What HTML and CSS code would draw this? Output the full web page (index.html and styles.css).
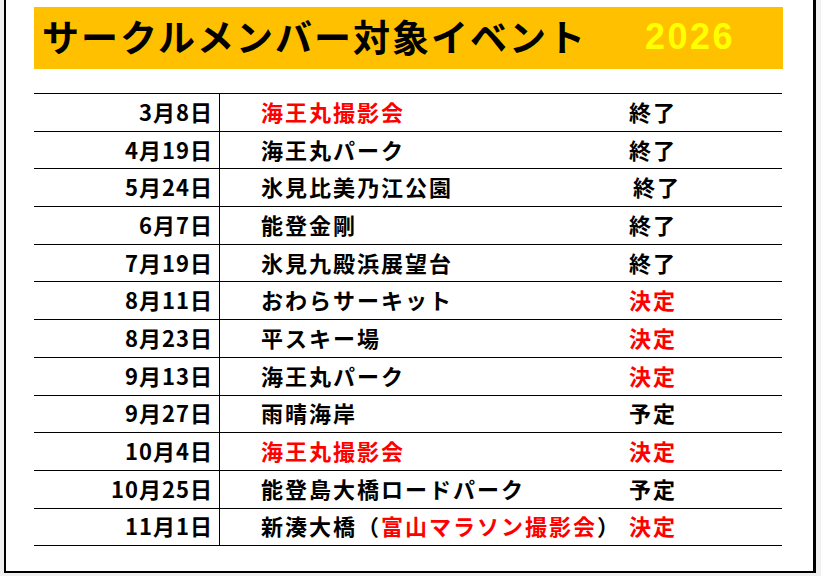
FILE: index.html
```html
<!DOCTYPE html>
<html lang="ja">
<head>
<meta charset="utf-8">
<title>サークルメンバー対象イベント 2026</title>
<link rel="stylesheet" href="styles.css">
</head>
<body>
<div class="frame">
  <div class="banner">
    <span class="title">サークルメンバー対象イベント</span>
    <span class="year">2026</span>
  </div>
  <div class="table">
    <div class="row"><div class="date">3月8日</div><div class="event red">海王丸撮影会</div><div class="status">終了</div></div>
    <div class="row"><div class="date">4月19日</div><div class="event">海王丸パーク</div><div class="status">終了</div></div>
    <div class="row"><div class="date">5月24日</div><div class="event">氷見比美乃江公園</div><div class="status shift">終了</div></div>
    <div class="row"><div class="date">6月7日</div><div class="event">能登金剛</div><div class="status">終了</div></div>
    <div class="row"><div class="date">7月19日</div><div class="event">氷見九殿浜展望台</div><div class="status">終了</div></div>
    <div class="row"><div class="date">8月11日</div><div class="event">おわらサーキット</div><div class="status red">決定</div></div>
    <div class="row"><div class="date">8月23日</div><div class="event">平スキー場</div><div class="status red">決定</div></div>
    <div class="row"><div class="date">9月13日</div><div class="event">海王丸パーク</div><div class="status red">決定</div></div>
    <div class="row"><div class="date">9月27日</div><div class="event">雨晴海岸</div><div class="status">予定</div></div>
    <div class="row"><div class="date">10月4日</div><div class="event red">海王丸撮影会</div><div class="status red">決定</div></div>
    <div class="row"><div class="date">10月25日</div><div class="event">能登島大橋ロードパーク</div><div class="status">予定</div></div>
    <div class="row"><div class="date">11月1日</div><div class="event">新湊大橋（<span class="red">富山マラソン撮影会</span>）</div><div class="status red">決定</div></div>
  </div>
</div>
</body>
</html>
```

FILE: styles.css
```css
html, body {
  margin: 0;
  padding: 0;
  background: #f0f0f0;
  overflow: hidden;
}
body {
  font-family: "Noto Sans CJK JP", "Noto Sans", sans-serif;
  color: #000;
}
.frame {
  box-sizing: border-box;
  margin-left: 4px;
  width: 812px;
  height: 573px;
  background: #fff;
  border-left: 2px solid #000;
  border-right: 3px solid #000;
  border-bottom: 2px solid #000;
  padding: 7px 0 0 28px;
}
.banner {
  box-sizing: border-box;
  width: 749px;
  height: 62px;
  background: #ffc000;
  display: flex;
  align-items: center;
  padding-left: 8px;
}
.title {
  font-size: 37px;
  font-weight: 700;
  letter-spacing: 2px;
  line-height: 1;
  margin-top: -3px;
}
.year {
  font-family: "Liberation Sans", Arial, sans-serif;
  font-size: 36px;
  font-weight: 700;
  letter-spacing: 2.5px;
  color: #ffff00;
  margin-left: 58px;
  line-height: 1;
  margin-top: -3px;
}
.table {
  margin-top: 24px;
  width: 748px;
  border-top: 1px solid #000;
}
.row {
  display: grid;
  grid-template-columns: 186px 409px 1fr;
  height: 36.7px;
  border-bottom: 1px solid #000;
  font-size: 22px;
  font-weight: 700;
  letter-spacing: 2px;
  line-height: 1;
}
.row > div {
  display: flex;
  align-items: center;
  white-space: nowrap;
  padding-bottom: 3px;
  box-sizing: border-box;
}
.date {
  justify-content: flex-end;
  padding-right: 6px;
  letter-spacing: 1px;
  border-right: 1px solid #000;
}
.event {
  padding-left: 41px;
}
.status {
  padding-left: 0;
}
.status.shift {
  padding-left: 4px;
}
.red {
  color: #ff0000;
}
```
